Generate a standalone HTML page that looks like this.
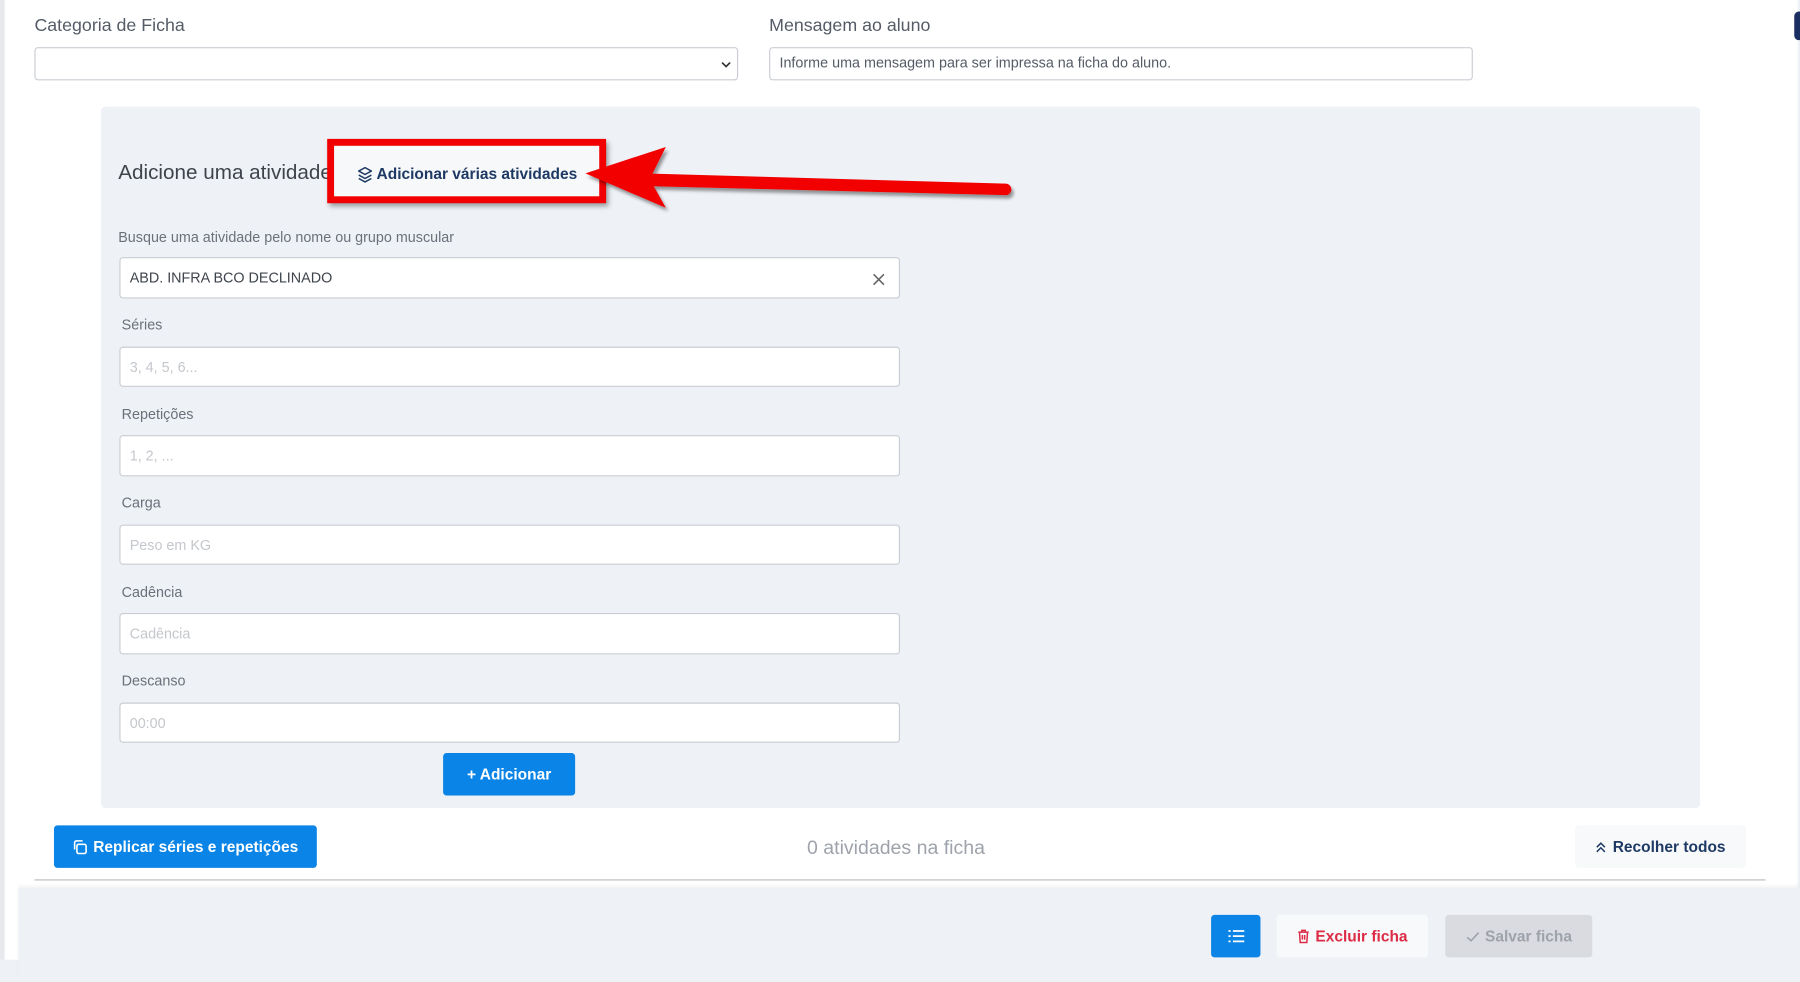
<!DOCTYPE html>
<html><head><meta charset="utf-8">
<style>
*{box-sizing:border-box;margin:0;padding:0}
html,body{width:1800px;height:981px;overflow:hidden;background:#eef1f6;font-family:"Liberation Sans",sans-serif}
#s{position:absolute;left:0;top:0;width:1568px;height:855px;transform:scale(1.14796);transform-origin:0 0;background:#eef1f6}
.a{position:absolute}
.page{left:4px;top:0;width:1562px;height:836px;background:#fff}
.lbl{color:#555b66;font-size:15.5px}
.inp{background:#fff;border:1px solid #c9cdd3;border-radius:3px}
.sl{color:#6b717a;font-size:12.5px}
.ph{color:#c4c7cc;font-size:12.5px;position:absolute;left:8px;top:10px}
.btn{border-radius:3px;display:flex;align-items:center;justify-content:center;font-weight:bold;font-size:13.5px}
</style></head><body><div id="s">
<div class="a page"></div>
<div class="a" style="left:0;top:0;width:4px;height:836px;background:#e7e9ed"></div>
<div class="a" style="left:1563px;top:10px;width:6px;height:25px;background:#1b2f63;border-radius:4px 0 0 4px"></div>

<div class="a lbl" style="left:30px;top:14px">Categoria de Ficha</div>
<div class="a inp" style="left:30px;top:41px;width:613px;height:29px"><svg class="a" style="right:5px;top:11px" width="9" height="7" viewBox="0 0 9 7"><path d="M1 1.5l3.5 3.5 3.5-3.5" fill="none" stroke="#333" stroke-width="1.5"/></svg></div>
<div class="a lbl" style="left:670px;top:14px">Mensagem ao aluno</div>
<div class="a inp" style="left:670px;top:41px;width:613px;height:29px"><span class="a" style="left:8px;top:6px;font-size:12.5px;color:#555b66">Informe uma mensagem para ser impressa na ficha do aluno.</span></div>

<div class="a" style="left:88px;top:93px;width:1393px;height:611px;background:#eef1f6;border-radius:4px"></div>
<div class="a" style="left:103px;top:140px;font-size:18px;color:#3f444c">Adicione uma atividade</div>
<div class="a" style="left:289px;top:125px;width:236px;height:49px;background:#f7f8f9;box-shadow:0 0 4px rgba(0,0,0,.25)"></div>
<div class="a" style="left:285px;top:121px;width:243px;height:56px;border:6px solid #f20000;box-shadow:2px 3px 4px rgba(0,0,0,.35)"></div>
<svg class="a" style="left:311px;top:145px" width="14" height="15" viewBox="0 0 14 15"><path d="M7 1L1.5 4 7 7 12.5 4z M1.5 7.5L7 10.5 12.5 7.5 M1.5 10.5L7 13.5 12.5 10.5" fill="none" stroke="#1e3a64" stroke-width="1.3" stroke-linejoin="round"/></svg>
<div class="a" style="left:328px;top:144px;font-size:13.5px;font-weight:bold;color:#1e3a64">Adicionar várias atividades</div>
<svg class="a" style="left:0;top:0" width="1568" height="855"><defs><filter id="f"><feDropShadow dx="2" dy="3" stdDeviation="1.5" flood-opacity=".4"/></filter></defs><g filter="url(#f)"><path d="M510 151 L580 128 L566 156 L580 181 Z" fill="#f20000"/><path d="M560 151 L876 160 L876 170 L560 162 Z" fill="#f20000"/><circle cx="876" cy="165" r="5" fill="#f20000"/></g></svg>

<div class="a sl" style="left:103px;top:200px">Busque uma atividade pelo nome ou grupo muscular</div>
<div class="a inp" style="left:104px;top:224px;width:680px;height:36px"><span class="a" style="left:8px;top:10px;font-size:12.5px;color:#3f444c">ABD. INFRA BCO DECLINADO</span><svg class="a" style="right:12px;top:13px" width="11" height="11" viewBox="0 0 11 11"><path d="M1 1l9 9M10 1l-9 9" stroke="#666" stroke-width="1.4"/></svg></div>

<div class="a sl" style="left:106px;top:276px">Séries</div>
<div class="a inp" style="left:104px;top:302px;width:680px;height:35px"><span class="ph">3, 4, 5, 6...</span></div>
<div class="a sl" style="left:106px;top:354px">Repetições</div>
<div class="a inp" style="left:104px;top:379px;width:680px;height:36px"><span class="ph">1, 2, ...</span></div>
<div class="a sl" style="left:106px;top:431px">Carga</div>
<div class="a inp" style="left:104px;top:457px;width:680px;height:35px"><span class="ph">Peso em KG</span></div>
<div class="a sl" style="left:106px;top:509px">Cadência</div>
<div class="a inp" style="left:104px;top:534px;width:680px;height:36px"><span class="ph">Cadência</span></div>
<div class="a sl" style="left:106px;top:586px">Descanso</div>
<div class="a inp" style="left:104px;top:612px;width:680px;height:35px"><span class="ph">00:00</span></div>

<div class="a btn" style="left:386px;top:656px;width:115px;height:37px;background:#0a84e6;color:#fff">+ Adicionar</div>

<div class="a btn" style="left:47px;top:719px;width:229px;height:37px;background:#0a84e6;color:#fff"><svg width="14" height="14" viewBox="0 0 14 14" style="margin-right:4px"><rect x="4" y="4.5" width="8" height="8" rx="1.5" fill="none" stroke="#fff" stroke-width="1.4"/><path d="M2 9V3a1.5 1.5 0 011.5-1.5H9" fill="none" stroke="#fff" stroke-width="1.4"/></svg>Replicar séries e repetições</div>
<div class="a" style="left:703px;top:729px;font-size:17px;color:#9ea3ab">0 atividades na ficha</div>
<div class="a btn" style="left:1372px;top:719px;width:149px;height:37px;background:#f8f9fa;color:#1e3a64"><svg width="9" height="10" viewBox="0 0 9 10" style="margin-right:6px"><path d="M1 5l3.5-3.5L8 5M1 9l3.5-3.5L8 9" fill="none" stroke="#1e3a64" stroke-width="1.3"/></svg>Recolher todos</div>
<div class="a" style="left:30px;top:766px;width:1508px;height:1px;background:#bbb"></div>

<div class="a" style="left:16px;top:773px;width:1552px;height:82px;background:#eef1f6;box-shadow:0 -2px 3px rgba(0,0,0,.04)"></div>
<div class="a btn" style="left:1055px;top:797px;width:43px;height:37px;background:#0a84e6"><svg width="14" height="11" viewBox="0 0 14 11"><path d="M0 1h2M4 1h10M0 5.5h2M4 5.5h10M0 10h2M4 10h10" stroke="#fff" stroke-width="1.5"/></svg></div>
<div class="a btn" style="left:1112px;top:797px;width:132px;height:37px;background:#f8f9fa;color:#dc2b45"><svg width="11" height="13" viewBox="0 0 11 13" style="margin-right:5px"><path d="M1 3h9M4 3V1.5h3V3M2 3l.6 9h5.8L9 3M4.5 5.5v4M6.5 5.5v4" fill="none" stroke="#dc2b45" stroke-width="1.3"/></svg>Excluir ficha</div>
<div class="a btn" style="left:1259px;top:797px;width:128px;height:37px;background:#d9dbe0;color:#9ea3ab"><svg width="12" height="10" viewBox="0 0 12 10" style="margin-right:5px"><path d="M1 5.5l3.5 3L11 1.5" fill="none" stroke="#9ea3ab" stroke-width="1.4"/></svg>Salvar ficha</div>
</div></body></html>
